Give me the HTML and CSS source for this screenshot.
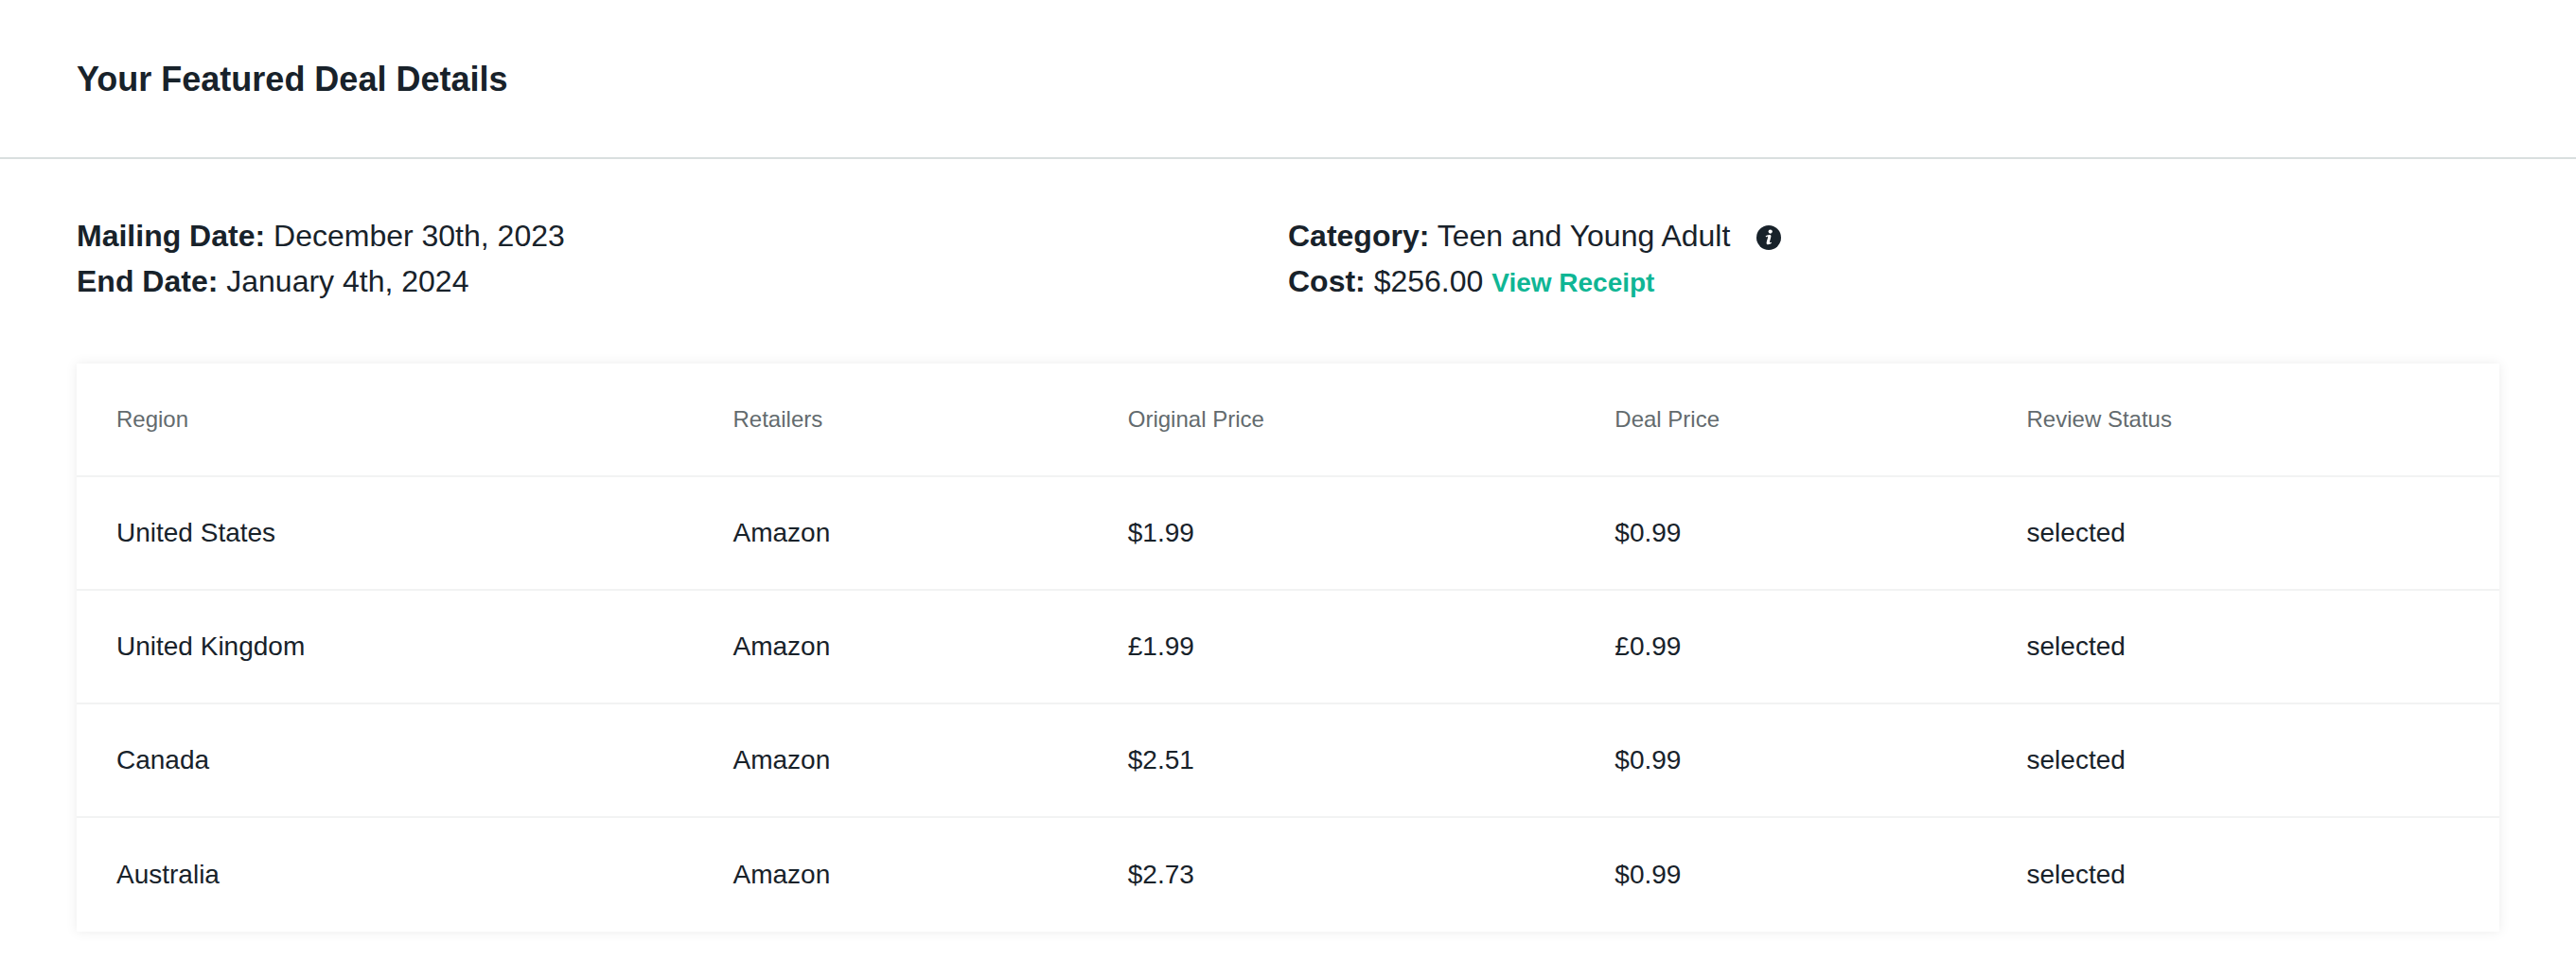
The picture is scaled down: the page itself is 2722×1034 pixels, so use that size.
FILE: index.html
```html
<!DOCTYPE html>
<html lang="en">
<head>
    <meta charset="UTF-8">
    <meta name="viewport" content="width=device-width, initial-scale=1.0">
    <title>Your Featured Deal Details</title>
    <link rel="stylesheet" href="styles.css">
</head>
<body>
    <header class="header">
        <h1>Your Featured Deal Details</h1>
    </header>

    <main class="content">
        <div class="summary">
            <div class="summary-col">
                <p><strong>Mailing Date:</strong> December 30th, 2023</p>
                <p><strong>End Date:</strong> January 4th, 2024</p>
            </div>
            <div class="summary-col">
                <p class="category">
                    <span><strong>Category:</strong> Teen and Young Adult</span>
                    <button type="button" class="info" aria-label="Category info">
                        <svg viewBox="0 0 26 26" width="26" height="26" aria-hidden="true">
                            <circle cx="13" cy="13" r="13" fill="#18222a"/>
                            <circle cx="14.7" cy="6.6" r="2.1" fill="#fff"/>
                            <path d="M9.6 11.6 C10.8 10.2 15.6 9 15.4 11.4 C15.2 13.4 14 16.4 14 17.8 C14 18.8 15 18.2 15.6 17.8 L16 18.6 C14.6 20.2 10.6 21.4 10.6 18.8 C10.6 17 12 13.8 12 12.4 C12 11.4 10.8 12 10.2 12.4 Z" fill="#fff"/>
                        </svg>
                    </button>
                </p>
                <p><strong>Cost:</strong> $256.00 <a href="#" class="receipt">View Receipt</a></p>
            </div>
        </div>

        <table class="deals">
            <thead>
                <tr>
                    <th class="region">Region</th>
                    <th class="retailers">Retailers</th>
                    <th class="original">Original Price</th>
                    <th class="deal">Deal Price</th>
                    <th>Review Status</th>
                </tr>
            </thead>
            <tbody>
                <tr>
                    <td>United States</td>
                    <td>Amazon</td>
                    <td>$1.99</td>
                    <td>$0.99</td>
                    <td>selected</td>
                </tr>
                <tr>
                    <td>United Kingdom</td>
                    <td>Amazon</td>
                    <td>£1.99</td>
                    <td>£0.99</td>
                    <td>selected</td>
                </tr>
                <tr>
                    <td>Canada</td>
                    <td>Amazon</td>
                    <td>$2.51</td>
                    <td>$0.99</td>
                    <td>selected</td>
                </tr>
                <tr>
                    <td>Australia</td>
                    <td>Amazon</td>
                    <td>$2.73</td>
                    <td>$0.99</td>
                    <td>selected</td>
                </tr>
            </tbody>
        </table>
    </main>
</body>
</html>
```
FILE: styles.css
```css
* {
    box-sizing: border-box;
}

body {
    font-family: "Helvetica Neue", "Liberation Sans", Arial, sans-serif;
    margin: 0;
    background-color: #fff;
    color: #18222a;
}

.header {
    padding: 60px 81px 58px;
    border-bottom: 2px solid #d9dfdf;
}

.header h1 {
    margin: 0;
    font-size: 36px;
    line-height: 48px;
}

.content {
    padding: 57px 81px 48px;
}

.summary {
    display: flex;
    margin-bottom: 63px;
}

.summary-col {
    flex: 1;
}

.summary p {
    margin: 0;
    height: 48px;
    font-size: 32px;
    line-height: 48px;
}

.summary .category {
    display: flex;
    align-items: center;
    gap: 28px;
}

.info {
    display: flex;
    padding: 4px 0 0;
    border: none;
    background: none;
    cursor: pointer;
}

.receipt {
    font-size: 28px;
    font-weight: bold;
    color: #0fb695;
    text-decoration: none;
}

.receipt:hover {
    text-decoration: underline;
}

.deals {
    width: 100%;
    table-layout: fixed;
    border-collapse: separate;
    border-spacing: 0;
    box-shadow: 0 0 12px rgba(0, 0, 0, 0.08);
}

.deals th,
.deals td {
    height: 120px;
    padding: 0 40px 0 42px;
    text-align: left;
    font-size: 28px;
    border-bottom: 2px solid #f2f3f3;
}

.deals th {
    font-size: 24px;
    font-weight: normal;
    color: #636b6e;
}

.deals tbody tr:last-child td {
    border-bottom: none;
}

.deals thead th {
    border-bottom: 2px solid #f2f3f3;
}

.deals .region {
    width: 25.45%;
}

.deals .retailers {
    width: 16.3%;
}

.deals .original {
    width: 20.1%;
}

.deals .deal {
    width: 17%;
}
```
